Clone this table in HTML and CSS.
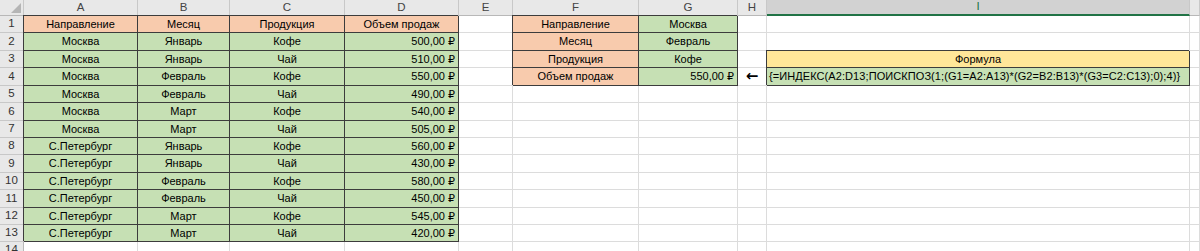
FILE: index.html
```html
<!DOCTYPE html>
<html lang="ru">
<head>
<meta charset="utf-8">
<title>Excel</title>
<link rel="stylesheet" href="styles.css">
</head>
<body>
<div class="sheet">
  <div class="c corner"><span class="tri"></span></div>
  <div class="c hd">A</div><div class="c hd">B</div><div class="c hd">C</div><div class="c hd">D</div><div class="c hd">E</div><div class="c hd">F</div><div class="c hd">G</div><div class="c hd">H</div><div class="c hd sel">I</div><div class="c hd"></div>

  <div class="c rh">1</div>
  <div class="c p">Направление</div><div class="c p">Месяц</div><div class="c p">Продукция</div><div class="c p">Объем продаж</div>
  <div class="c"></div><div class="c p">Направление</div><div class="c g">Москва</div><div class="c"></div><div class="c"></div><div class="c"></div>

  <div class="c rh">2</div>
  <div class="c g">Москва</div><div class="c g">Январь</div><div class="c g">Кофе</div><div class="c g r">500,00 ₽</div>
  <div class="c"></div><div class="c p">Месяц</div><div class="c g">Февраль</div><div class="c"></div><div class="c"></div><div class="c"></div>

  <div class="c rh">3</div>
  <div class="c g">Москва</div><div class="c g">Январь</div><div class="c g">Чай</div><div class="c g r">510,00 ₽</div>
  <div class="c"></div><div class="c p">Продукция</div><div class="c g">Кофе</div><div class="c"></div><div class="c y">Формула</div><div class="c"></div>

  <div class="c rh">4</div>
  <div class="c g">Москва</div><div class="c g">Февраль</div><div class="c g">Кофе</div><div class="c g r">550,00 ₽</div>
  <div class="c"></div><div class="c p">Объем продаж</div><div class="c g r">550,00 ₽</div><div class="c arrow">←</div><div class="c g l formula">{=ИНДЕКС(A2:D13;ПОИСКПОЗ(1;(G1=A2:A13)*(G2=B2:B13)*(G3=C2:C13);0);4)}</div><div class="c"></div>

  <div class="c rh">5</div>
  <div class="c g">Москва</div><div class="c g">Февраль</div><div class="c g">Чай</div><div class="c g r">490,00 ₽</div>
  <div class="c"></div><div class="c"></div><div class="c"></div><div class="c"></div><div class="c"></div><div class="c"></div>

  <div class="c rh">6</div>
  <div class="c g">Москва</div><div class="c g">Март</div><div class="c g">Кофе</div><div class="c g r">540,00 ₽</div>
  <div class="c"></div><div class="c"></div><div class="c"></div><div class="c"></div><div class="c"></div><div class="c"></div>

  <div class="c rh">7</div>
  <div class="c g">Москва</div><div class="c g">Март</div><div class="c g">Чай</div><div class="c g r">505,00 ₽</div>
  <div class="c"></div><div class="c"></div><div class="c"></div><div class="c"></div><div class="c"></div><div class="c"></div>

  <div class="c rh">8</div>
  <div class="c g">С.Петербург</div><div class="c g">Январь</div><div class="c g">Кофе</div><div class="c g r">560,00 ₽</div>
  <div class="c"></div><div class="c"></div><div class="c"></div><div class="c"></div><div class="c"></div><div class="c"></div>

  <div class="c rh">9</div>
  <div class="c g">С.Петербург</div><div class="c g">Январь</div><div class="c g">Чай</div><div class="c g r">430,00 ₽</div>
  <div class="c"></div><div class="c"></div><div class="c"></div><div class="c"></div><div class="c"></div><div class="c"></div>

  <div class="c rh">10</div>
  <div class="c g">С.Петербург</div><div class="c g">Февраль</div><div class="c g">Кофе</div><div class="c g r">580,00 ₽</div>
  <div class="c"></div><div class="c"></div><div class="c"></div><div class="c"></div><div class="c"></div><div class="c"></div>

  <div class="c rh">11</div>
  <div class="c g">С.Петербург</div><div class="c g">Февраль</div><div class="c g">Чай</div><div class="c g r">450,00 ₽</div>
  <div class="c"></div><div class="c"></div><div class="c"></div><div class="c"></div><div class="c"></div><div class="c"></div>

  <div class="c rh">12</div>
  <div class="c g">С.Петербург</div><div class="c g">Март</div><div class="c g">Кофе</div><div class="c g r">545,00 ₽</div>
  <div class="c"></div><div class="c"></div><div class="c"></div><div class="c"></div><div class="c"></div><div class="c"></div>

  <div class="c rh">13</div>
  <div class="c g">С.Петербург</div><div class="c g">Март</div><div class="c g">Чай</div><div class="c g r">420,00 ₽</div>
  <div class="c"></div><div class="c"></div><div class="c"></div><div class="c"></div><div class="c"></div><div class="c"></div>

  <div class="c rh">14</div>
  <div class="c"></div><div class="c"></div><div class="c"></div><div class="c"></div>
  <div class="c"></div><div class="c"></div><div class="c"></div><div class="c"></div><div class="c"></div><div class="c"></div>
</div>
</body>
</html>
```

FILE: styles.css
```css
html, body {
  margin: 0;
  padding: 0;
  background: #ffffff;
}
body {
  width: 1200px;
  height: 251px;
  overflow: hidden;
  font-family: "Liberation Sans", "DejaVu Sans", sans-serif;
  font-size: 11px;
  color: #000;
}
.sheet {
  display: grid;
  grid-template-columns: 24px 114px 92px 115px 114px 54px 126px 99px 29px 423px 10px;
  grid-template-rows: 16px 17px 18px 17px 18px 17px 18px 17px 17px 18px 17px 18px 17px 17px 17px;
  width: 1200px;
  height: 251px;
  overflow: hidden;
}
.c {
  box-sizing: border-box;
  border-right: 1px solid #dcdcdc;
  border-bottom: 1px solid #dcdcdc;
  display: flex;
  align-items: center;
  justify-content: center;
  padding: 0 3px;
  white-space: nowrap;
  overflow: hidden;
  line-height: 1;
}
.hd {
  background: #e8e8e8;
  color: #444;
  font-size: 11.5px;
  border-right-color: #c8c8c8;
  border-bottom-color: #b8b8b8;
}
.hd.sel {
  background: #d2d2d2;
  color: #217346;
  border-bottom: 2px solid #217346;
}
.corner {
  background: #e8e8e8;
  border-right-color: #c8c8c8;
  border-bottom-color: #b8b8b8;
  justify-content: flex-end;
  align-items: flex-end;
  padding: 0 2px 2px 0;
}
.tri {
  width: 10px;
  height: 10px;
  background: #b5b5b5;
  clip-path: polygon(100% 0, 100% 100%, 0 100%);
}
.rh {
  background: #e8e8e8;
  color: #333;
  font-size: 11.5px;
  border-right-color: #b8b8b8;
  border-bottom-color: #c8c8c8;
}
.p, .g, .y {
  border-right-color: #3c3c3c;
  border-bottom-color: #3c3c3c;
  box-shadow: -1px -1px 0 #3c3c3c;
}
.p { background: #f8cbad; }
.g { background: #c6e0b4; }
.y { background: #ffe699; }
.r { justify-content: flex-end; }
.l { justify-content: flex-start; padding-left: 2px; }
.formula { letter-spacing: 0.08px; }
.arrow {
  font-family: "DejaVu Sans", sans-serif;
  font-size: 15px;
  font-weight: bold;
  padding: 0;
}
```
